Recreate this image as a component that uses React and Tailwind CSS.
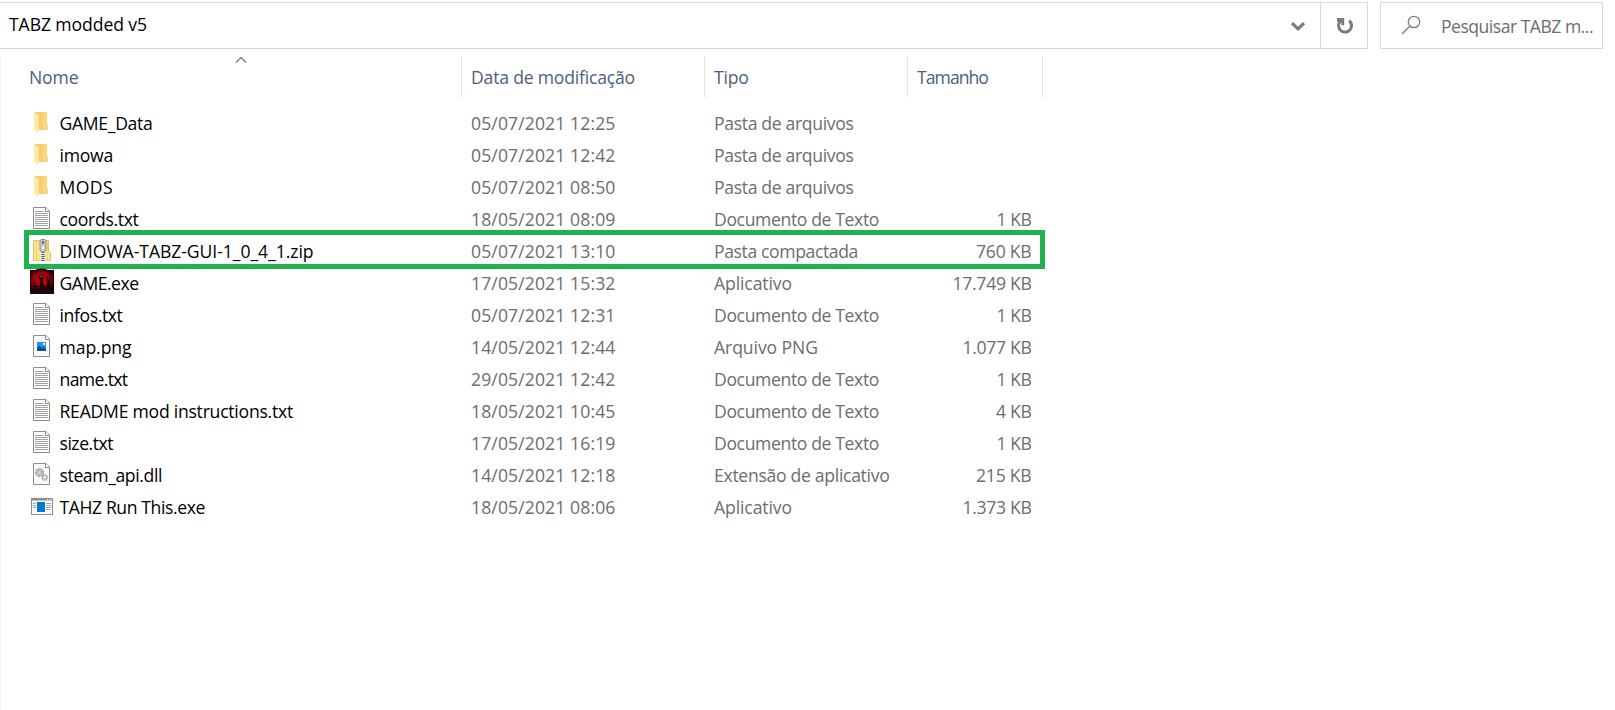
import { useLayoutEffect, useRef } from "react";

// Spreads a label over a fixed advance width by adjusting its tracking.
function Fit({ w, children, className = "" }) {
  const ref = useRef(null);
  useLayoutEffect(() => {
    const el = ref.current;
    el.style.letterSpacing = "0px";
    const natural = el.getBoundingClientRect().width;
    el.style.letterSpacing = `${(w - natural) / children.length}px`;
  }, [w, children]);
  return (
    <span ref={ref} className={`inline-block whitespace-pre ${className}`}>
      {children}
    </span>
  );
}

const Page = () => (
  <>
    <path d="M3.5 3.5H16L19.5 7V24.5H3.5Z" fill="#fbfbfb" stroke="#8c8c8c" />
    <path d="M15.5 3.5V7.5H19.5" fill="#fff" stroke="#8c8c8c" />
  </>
);

const ICONS = {
  folder: (
    <>
      <defs>
        <linearGradient id="folderBack" x1="0" x2="1">
          <stop offset="0" stopColor="#eec668" />
          <stop offset="1" stopColor="#fddc80" />
        </linearGradient>
      </defs>
      <path d="M5 4H17V15.5L18 16.5V22H8L5 20Z" fill="url(#folderBack)" />
      <path d="M4 4.2L8.7 7V22L8 25L4 21.5Z" fill="#ffe9a9" />
    </>
  ),
  txt: (
    <>
      <Page />
      <path
        d="M5 7.5H13M5 9.5H18M5 11.5H18M5 13.5H18M5 15.5H18M5 17.5H18M5 19.5H18M5 21.5H18"
        stroke="#a3a3a3"
      />
    </>
  ),
  zip: (
    <>
      <path d="M3.5 4.5H18.5V15.5L20.5 16.5V24.5H3.5Z" fill="#fbe596" stroke="#e5c154" />
      <path d="M6.5 4V25M17.5 5V24" stroke="#f0cf70" />
      <path d="M13 14V25" stroke="#e4e4e4" strokeWidth="5" />
      <path d="M13 14V25" stroke="#555" strokeWidth="3" strokeDasharray="1 1" />
      <path d="M11 3.5H15L16 5V14L14.5 16H11.5L10 14V5Z" fill="#c6c8ca" stroke="#8c8f92" />
      <path d="M13 5V8" stroke="#555" strokeWidth="1.5" />
      <path d="M13 10.5V13" stroke="#fff" strokeWidth="1.5" />
    </>
  ),
  game: (
    <>
      <defs>
        <radialGradient id="blood">
          <stop offset="0" stopColor="#d3000c" />
          <stop offset="0.6" stopColor="#a2000a" />
          <stop offset="1" stopColor="#2a0305" />
        </radialGradient>
      </defs>
      <rect y="2" width="24" height="24" fill="#1c0305" />
      <ellipse cx="11.5" cy="12" rx="13" ry="11.5" fill="url(#blood)" />
      <path d="M7 26L10.5 14L10 10H12.5L13.5 17L16.5 19L17.5 12H19.5L20.5 18L24 21V26Z" fill="#1c0507" />
      <path d="M0 26V23L5.5 21V18H7L8 21L10 26Z" fill="#1c0507" />
      <circle cx="11" cy="9.5" r="2.3" fill="#160809" />
      <circle cx="18.5" cy="10.5" r="1.8" fill="#160809" />
      <circle cx="6" cy="17" r="1.9" fill="#160809" />
      <path d="M10.5 8.5h1.5M18 10h1M6 16.5h1" stroke="#ad8b8b" />
    </>
  ),
  png: (
    <>
      <Page />
      <rect x="7" y="10" width="9" height="9" fill="#2196ea" />
      <path d="M7 19V16L9.5 13.5L12 16L13.5 15L16 17V19Z" fill="#0b4f9e" />
      <rect x="13" y="11" width="2" height="2" fill="#fff" />
    </>
  ),
  dll: (
    <>
      <Page />
      <circle cx="9.5" cy="12.5" r="3.6" fill="#d5dade" stroke="#8d989f" strokeWidth="1.8" strokeDasharray="1.6 0.9" />
      <circle cx="9.5" cy="12.5" r="1.5" fill="#fff" stroke="#8d989f" />
      <circle cx="14.8" cy="17.5" r="2.6" fill="#d5dade" stroke="#8d989f" strokeWidth="1.5" strokeDasharray="1.2 0.8" />
      <circle cx="14.8" cy="17.5" r="0.8" fill="#fff" />
    </>
  ),
  exe: (
    <>
      <rect x="1.5" y="6.5" width="21" height="16" fill="#fafafa" stroke="#8c8c8c" />
      <path d="M1 7.5H23" stroke="#8c8c8c" strokeWidth="2" />
      <path d="M17 7.5H22" stroke="#e8e8e8" strokeDasharray="1 1" />
      <path d="M3 11.5H6M3 13.5H6M3 15.5H6M16 11.5H21M16 13.5H21M16 15.5H21M16 17.5H20" stroke="#a3a3a3" />
      <rect x="7" y="10" width="8" height="10" fill="#0078d7" />
    </>
  ),
};

const FOLDER = ["Pasta de arquivos", 139.5];
const TEXT = ["Documento de Texto", 165];
const APP = ["Aplicativo", 78];

const ROWS = [
  ["folder", "GAME_Data", 93, "05/07/2021 12:25", FOLDER],
  ["folder", "imowa", 53.5, "05/07/2021 12:42", FOLDER],
  ["folder", "MODS", 53.5, "05/07/2021 08:50", FOLDER],
  ["txt", "coords.txt", 79, "18/05/2021 08:09", TEXT, "1 KB", 35],
  ["zip", "DIMOWA-TABZ-GUI-1_0_4_1.zip", 254, "05/07/2021 13:10", ["Pasta compactada", 144], "760 KB", 55.5],
  ["game", "GAME.exe", 79, "17/05/2021 15:32", APP, "17.749 KB", 79],
  ["txt", "infos.txt", 63, "05/07/2021 12:31", TEXT, "1 KB", 35],
  ["png", "map.png", 72, "14/05/2021 12:44", ["Arquivo PNG", 104], "1.077 KB", 69],
  ["txt", "name.txt", 68, "29/05/2021 12:42", TEXT, "1 KB", 35],
  ["txt", "README mod instructions.txt", 233.5, "18/05/2021 10:45", TEXT, "4 KB", 35.5],
  ["txt", "size.txt", 53.5, "17/05/2021 16:19", TEXT, "1 KB", 35],
  ["dll", "steam_api.dll", 102.5, "14/05/2021 12:18", ["Extensão de aplicativo", 175.5], "215 KB", 55.5],
  ["exe", "TAHZ Run This.exe", 145.5, "18/05/2021 08:06", APP, "1.373 KB", 69],
];

const Heading = ({ label, w, className }) => (
  <div className={`flex h-[41px] border-r border-[#e2e2e2] pt-[9px] leading-6 ${className}`}>
    <Fit w={w}>{label}</Fit>
  </div>
);

function Row({ icon, name, nameW, date, type, size, sizeW }) {
  return (
    <div className="relative flex h-8 items-center pb-0.5 pl-[29px] text-[#6d6d6d]">
      <svg className="h-7 w-6 shrink-0 self-start" viewBox="0 0 24 28" fill="none">
        {ICONS[icon]}
      </svg>
      <div className="w-[416px] pl-[5.5px] text-black">
        <Fit w={nameW}>{name}</Fit>
      </div>
      <div className="w-[244px] pl-px">
        <Fit w={144.5}>{date}</Fit>
      </div>
      <div className="w-[203px]">
        <Fit w={type[1]}>{type[0]}</Fit>
      </div>
      <div className="flex w-[114.5px] justify-end">{size && <Fit w={sizeW}>{size}</Fit>}</div>
      {icon === "zip" && (
        <div className="pointer-events-none absolute -top-1.5 left-[23px] h-[39px] w-[1021px] border-[5px] border-[#22b14c]" />
      )}
    </div>
  );
}

export default function App() {
  return (
    <div className="flex h-[710px] w-[1615px] flex-col overflow-hidden bg-white font-['Open_Sans','Noto_Sans',sans-serif] text-[17.6px] leading-6 text-[#6d6d6d]">
      <header className="flex h-[49px] pt-0.5">
        <div className="flex w-[1368px] border-y border-r border-[#d9d9d9]">
          <div className="flex-1 pt-[9px] pl-[9px] text-black">
            <Fit w={138}>TABZ modded v5</Fit>
          </div>
          <svg className="mt-[15px] mr-3.5 h-4 w-4" viewBox="0 0 16 16" fill="none">
            <path d="M2 5.2L8 10.8L14 5.2" stroke="#7a7a7a" strokeWidth="3.2" />
          </svg>
          <div className="flex w-[47px] border-l border-[#d9d9d9] pt-3.5 pl-[15px]">
            <svg className="h-[18px] w-[18px]" viewBox="0 0 18 18" fill="none">
              <path d="M13.2 3.6A6.5 6.5 0 1 1 3.6 5" stroke="#7a7a7a" strokeWidth="3" />
              <path d="M1 1H8.2V8.2H5.5V5.5L3.5 7L1 4Z" fill="#7a7a7a" />
            </svg>
          </div>
        </div>
        <div className="ml-3 flex w-[223px] border border-[#d9d9d9]">
          <svg className="mt-3 ml-5 h-5 w-5" viewBox="0 0 20 20" fill="none" stroke="#7a7a7a" strokeWidth="1.2">
            <circle cx="13" cy="7" r="5.7" />
            <path d="M9 11L1 19" />
          </svg>
          <div className="pt-[11px] pl-5">
            <Fit w={152}>Pesquisar TABZ m...</Fit>
          </div>
        </div>
      </header>
      <main className="mt-[7px] flex-1 border-l border-[#f2f2f2]">
        <div className="relative flex text-[#4c607a]">
          <Heading label="Nome" w={49.5} className="w-[461px] pl-[28px]" />
          <Heading label="Data de modificação" w={164} className="w-[243px] pl-[9px]" />
          <Heading label="Tipo" w={34.5} className="w-[203px] pl-[9px]" />
          <Heading label="Tamanho" w={71} className="w-[135px] pl-[9px]" />
          <svg className="absolute top-0 left-[233.5px] h-2 w-3" viewBox="0 0 12 8" fill="none">
            <path d="M1 6.5L6 1.5L11 6.5" stroke="#6d6d6d" strokeWidth="1.1" />
          </svg>
        </div>
        <div className="mt-[11px]">
          {ROWS.map(([icon, name, nameW, date, type, size, sizeW]) => (
            <Row key={name} {...{ icon, name, nameW, date, type, size, sizeW }} />
          ))}
        </div>
      </main>
    </div>
  );
}
